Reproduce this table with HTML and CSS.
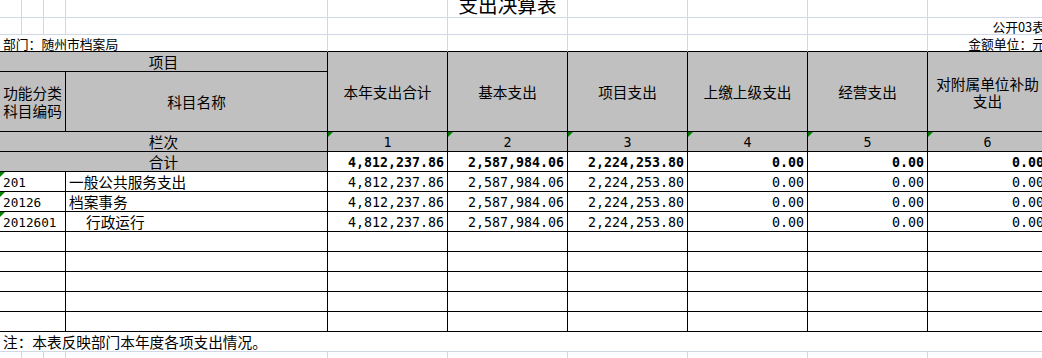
FILE: index.html
```html
<!DOCTYPE html>
<html lang="zh-CN">
<head>
<meta charset="utf-8">
<title>支出决算表</title>
<link rel="stylesheet" href="styles.css">
</head>
<body>
<div class="sheet">
  <!-- row 1 -->
  <div class="c"></div><div class="c"></div><div class="c"></div><div class="c"></div><div class="c"></div>
  <div class="c title"><span>支出决算表</span></div>
  <div class="c"></div><div class="c"></div><div class="c"></div><div class="c"></div>
  <!-- row 2 -->
  <div class="c"></div><div class="c"></div><div class="c"></div><div class="c"></div><div class="c"></div>
  <div class="c"></div><div class="c"></div><div class="c"></div><div class="c"></div>
  <div class="c small right">公开03表</div>
  <!-- row 3 -->
  <div class="c top span4 small left">部门：随州市档案局</div>
  <div class="c top"></div><div class="c top"></div><div class="c top"></div><div class="c top"></div><div class="c top"></div>
  <div class="c top small right">金额单位：元</div>
  <!-- row 4/5 header -->
  <div class="c t h span4 center">项目</div>
  <div class="c t h rows2 center">本年支出合计</div>
  <div class="c t h rows2 center">基本支出</div>
  <div class="c t h rows2 center">项目支出</div>
  <div class="c t h rows2 center">上缴上级支出</div>
  <div class="c t h rows2 center">经营支出</div>
  <div class="c t h rows2 center wrap">对附属单位补助支出</div>
  <div class="c t h span3 center wrap code-head">功能分类科目编码</div>
  <div class="c t h center">科目名称</div>
  <!-- row 6 -->
  <div class="c t h span4 center">栏次</div>
  <div class="c t h center mono flag">1</div>
  <div class="c t h center mono flag">2</div>
  <div class="c t h center mono flag">3</div>
  <div class="c t h center mono flag">4</div>
  <div class="c t h center mono flag">5</div>
  <div class="c t h center mono flag">6</div>
  <!-- row 7 -->
  <div class="c t h span4 center">合计</div>
  <div class="c t num bold">4,812,237.86</div>
  <div class="c t num bold">2,587,984.06</div>
  <div class="c t num bold">2,224,253.80</div>
  <div class="c t num bold">0.00</div>
  <div class="c t num bold">0.00</div>
  <div class="c t num bold">0.00</div>
  <!-- data rows -->
  <div class="c t span3 left code flag">201</div>
  <div class="c t left">一般公共服务支出</div>
  <div class="c t num">4,812,237.86</div>
  <div class="c t num">2,587,984.06</div>
  <div class="c t num">2,224,253.80</div>
  <div class="c t num">0.00</div>
  <div class="c t num">0.00</div>
  <div class="c t num">0.00</div>

  <div class="c t span3 left code flag">20126</div>
  <div class="c t left">档案事务</div>
  <div class="c t num">4,812,237.86</div>
  <div class="c t num">2,587,984.06</div>
  <div class="c t num">2,224,253.80</div>
  <div class="c t num">0.00</div>
  <div class="c t num">0.00</div>
  <div class="c t num">0.00</div>

  <div class="c t span3 left code flag">2012601</div>
  <div class="c t left indent">行政运行</div>
  <div class="c t num">4,812,237.86</div>
  <div class="c t num">2,587,984.06</div>
  <div class="c t num">2,224,253.80</div>
  <div class="c t num">0.00</div>
  <div class="c t num">0.00</div>
  <div class="c t num">0.00</div>

  <div class="c t span3"></div><div class="c t"></div><div class="c t"></div><div class="c t"></div><div class="c t"></div><div class="c t"></div><div class="c t"></div><div class="c t"></div>
  <div class="c t span3"></div><div class="c t"></div><div class="c t"></div><div class="c t"></div><div class="c t"></div><div class="c t"></div><div class="c t"></div><div class="c t"></div>
  <div class="c t span3"></div><div class="c t"></div><div class="c t"></div><div class="c t"></div><div class="c t"></div><div class="c t"></div><div class="c t"></div><div class="c t"></div>
  <div class="c t span3"></div><div class="c t"></div><div class="c t"></div><div class="c t"></div><div class="c t"></div><div class="c t"></div><div class="c t"></div><div class="c t"></div>
  <div class="c t span3"></div><div class="c t"></div><div class="c t"></div><div class="c t"></div><div class="c t"></div><div class="c t"></div><div class="c t"></div><div class="c t"></div>
  <!-- note -->
  <div class="c note left">注：本表反映部门本年度各项支出情况。</div>
  <!-- trailing row -->
  <div class="c"></div><div class="c"></div><div class="c"></div><div class="c"></div><div class="c"></div>
  <div class="c"></div><div class="c"></div><div class="c"></div><div class="c"></div><div class="c"></div>
</div>
</body>
</html>
```

FILE: styles.css
```css
html, body {
  margin: 0;
  padding: 0;
  background: #ffffff;
  overflow: hidden;
}

body {
  width: 1042px;
  height: 358px;
  font-family: "Noto Sans CJK SC", sans-serif;
  font-size: 14.67px;
  color: #000000;
}

.sheet {
  display: grid;
  grid-template-columns: 22px 22px 22px 262px repeat(6, 120px);
  grid-template-rows: 18px 17px 17px 20px 60px repeat(12, 20px);
  width: 1048px;
}

.c {
  box-sizing: border-box;
  border-right: 1px solid #d0d7e5;
  border-bottom: 1px solid #d0d7e5;
  display: flex;
  align-items: center;
  white-space: nowrap;
  line-height: 17px;
  position: relative;
  min-width: 0;
}

.t {
  border-right-color: #000000;
  border-bottom-color: #000000;
}

.top {
  border-bottom-color: #000000;
}

.h {
  background: #c0c0c0;
}

.span3 { grid-column: span 3; }
.span4 { grid-column: span 4; }
.rows2 { grid-row: span 2; }

.center {
  justify-content: center;
  text-align: center;
}

.left {
  justify-content: flex-start;
  padding-left: 3px;
}

.right {
  justify-content: flex-end;
  padding-right: 2px;
}

.wrap {
  white-space: normal;
  padding: 0 3px;
}

.code-head {
  padding: 0 2px;
  line-height: 18px;
}

.small {
  font-size: 12.8px;
}

.title {
  align-items: flex-start;
  justify-content: center;
  overflow: visible;
}

.title span {
  font-size: 19.6px;
  line-height: 19.6px;
  margin-top: -5px;
}

.mono {
  font-family: "DejaVu Sans Mono", monospace;
  font-size: 13.3px;
  padding-top: 2px;
}

.num {
  font-family: "DejaVu Sans Mono", monospace;
  font-size: 13.3px;
  justify-content: flex-end;
  padding-right: 3px;
  padding-top: 2px;
}

.bold {
  font-weight: bold;
}

.code {
  font-family: "DejaVu Sans Mono", monospace;
  font-size: 12.7px;
  padding-top: 1px;
}

.indent {
  padding-left: 20px;
}

.flag::before {
  content: "";
  position: absolute;
  top: 0;
  left: 0;
  width: 0;
  height: 0;
  border-top: 5px solid #008000;
  border-right: 5px solid transparent;
}

.note {
  grid-column: span 10;
  border-right: none;
}
```
